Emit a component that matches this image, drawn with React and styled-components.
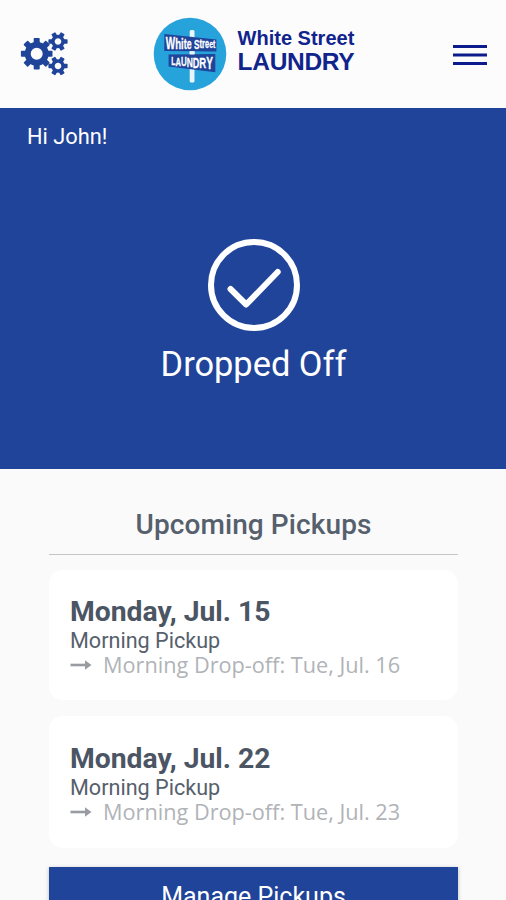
import React from 'react';
import styled, { createGlobalStyle } from 'styled-components';

const GlobalStyle = createGlobalStyle`
  * {
    box-sizing: border-box;
  }

  body {
    margin: 0;
    background-color: #fafafb;
    font-family: Roboto, sans-serif;
  }
`;

const Screen = styled.div`
  width: 100%;
  height: 100vh;
  overflow: hidden;
  display: flex;
  flex-direction: column;
`;

const HeaderWrapper = styled.header`
  flex: none;
  height: 108px;
  padding: 0 19px 0 20px;
  display: grid;
  grid-template-columns: 1fr auto 1fr;
  align-items: center;
  background-color: #fcfcfd;
`;

const IconButton = styled.button`
  display: flex;
  justify-self: ${({ side }) => side};
  padding: 0;
  border: none;
  background-color: transparent;
  color: ${({ color }) => color};
  cursor: pointer;
`;

const Brand = styled.div`
  display: flex;
  align-items: center;
  gap: 11px;
`;

const BrandName = styled.div`
  display: flex;
  flex-direction: column;
  padding-bottom: 9px;
  font-family: 'Liberation Sans', Arial, sans-serif;
  font-weight: bold;
  color: #11248c;
  white-space: nowrap;
`;

const BrandTop = styled.span`
  font-size: 20px;
  line-height: 24px;
`;

const BrandBottom = styled.span`
  font-size: 24.5px;
  line-height: 24px;
  letter-spacing: -0.3px;
`;

const Hero = styled.section`
  flex: none;
  height: 361px;
  background-color: #1f4499;
  color: white;
`;

const Greeting = styled.p`
  margin: 0;
  padding: 15px 27px 0;
  font-size: 21.8px;
  line-height: 28px;
`;

const Status = styled.div`
  display: flex;
  flex-direction: column;
  align-items: center;
  padding: 87px 0 0 1px;
`;

const StatusText = styled.h1`
  margin: 10px 0 0;
  font-size: 34.4px;
  font-weight: 400;
  line-height: 44px;
`;

const Content = styled.main`
  display: flex;
  flex-direction: column;
  padding: 0 48px 0 49px;
`;

const SectionTitle = styled.h2`
  margin: 0 0 15px;
  padding: 38px 0 12px;
  border-bottom: 1px solid #c4c6c8;
  color: #56606c;
  font-size: 28px;
  font-weight: 500;
  line-height: 35px;
  letter-spacing: 0.1px;
  text-align: center;
`;

const Card = styled.article`
  height: ${({ height }) => height}px;
  margin-bottom: ${({ gap }) => gap}px;
  padding: ${({ top }) => top}px 21px 0;
  border-radius: 14px;
  background-color: white;
`;

const CardDate = styled.h3`
  margin: 0;
  color: #4b5563;
  font-size: 28.3px;
  font-weight: 700;
  line-height: 34px;
`;

const CardSlot = styled.p`
  margin: 0;
  color: #56606c;
  font-size: 21.6px;
  line-height: 23px;
`;

const CardReturn = styled.p`
  display: flex;
  align-items: center;
  gap: 11px;
  margin: 0;
  color: #b0b3b7;
  font-family: 'Open Sans', sans-serif;
  font-size: 21.7px;
  line-height: 26px;
`;

const ManageButton = styled.button`
  height: 58px;
  flex: none;
  padding: 0;
  border: none;
  background-color: #1f4499;
  box-shadow: 0 1px 4px rgba(0, 0, 0, 0.25);
  color: white;
  font-family: inherit;
  font-size: 25px;
  cursor: pointer;
`;

const pickups = [
  { date: 'Monday, Jul. 15', dropOff: 'Tue, Jul. 16', height: 130, gap: 16, top: 25 },
  { date: 'Monday, Jul. 22', dropOff: 'Tue, Jul. 23', height: 132, gap: 19, top: 26 },
];

// one ring plus evenly spaced teeth
function Gear({ x, y, teeth, inner, outer, hole, tooth }) {
  const ring = (inner + hole) / 2;
  return (
    <g transform={`translate(${x} ${y})`}>
      <circle r={ring} fill="none" stroke="currentColor" strokeWidth={inner - hole} />
      {Array.from({ length: teeth }, (_, i) => (
        <rect
          key={i}
          x={ring}
          y={-tooth / 2}
          width={outer - ring}
          height={tooth}
          rx="0.8"
          fill="currentColor"
          transform={`rotate(${(360 / teeth) * i})`}
        />
      ))}
    </g>
  );
}

function GearsIcon() {
  return (
    <svg width="50" height="46" viewBox="0 0 50 46">
      <Gear x={16.7} y={22.7} teeth={8} inner={12} outer={15.8} hole={6} tooth={6} />
      <Gear x={38} y={10.5} teeth={6} inner={6.8} outer={9.6} hole={3.3} tooth={4.6} />
      <Gear x={38} y={35} teeth={6} inner={6.8} outer={9.6} hole={3.3} tooth={4.6} />
    </svg>
  );
}

// letters grow or shrink along the line, as on a sign seen at an angle
function SignText({ x, y, from, to, drop, scale, children }) {
  const letters = children.split('');
  return (
    <text transform={`translate(${x} ${y}) scale(${scale} 1)`} fill="white" stroke="white" strokeWidth="0.3" xmlSpace="preserve">
      {letters.map((letter, i) => (
        <tspan key={i} dy={i ? drop : 0} fontSize={from + ((to - from) * i) / (letters.length - 1)}>
          {letter}
        </tspan>
      ))}
    </text>
  );
}

function LogoBadge() {
  return (
    <svg width="74" height="74" viewBox="0 0 74 74" fontFamily="'Liberation Sans', sans-serif" fontWeight="bold">
      <circle cx="37" cy="37" r="36.3" fill="#27a3dc" />
      <rect x="36.7" y="13" width="4.8" height="52.5" rx="1.5" fill="#e9f4fb" />
      <path d="M11.3 17 63.4 22.5V34.5L11.3 34Z" fill="#1f4499" />
      <path d="M15.6 37.5 62.3 37V55.3L15.6 49.5Z" fill="#1f4499" />
      <rect x="36.7" y="34.2" width="4.8" height="3.2" fill="#e9f4fb" />
      <SignText x={12.8} y={31.8} from={16} to={11} drop={-0.05} scale={0.62}>White Street</SignText>
      <SignText x={18.3} y={47.8} from={11} to={16} drop={0.7} scale={0.63}>LAUNDRY</SignText>
    </svg>
  );
}

function MenuIcon() {
  return (
    <svg width="34" height="24" viewBox="0 0 34 24" stroke="currentColor" strokeWidth="3">
      <path d="M0 4.5H34M0 13H34M0 21.5H34" />
    </svg>
  );
}

function CheckIcon() {
  return (
    <svg width="94" height="94" viewBox="0 0 94 94" fill="none" stroke="white" strokeWidth="6">
      <circle cx="47" cy="47" r="43" />
      <path d="M23.5 51 39.2 66.5 70.7 34" strokeLinecap="round" strokeLinejoin="round" />
    </svg>
  );
}

function ArrowIcon() {
  return (
    <svg width="22" height="12" viewBox="0 0 22 12">
      <path d="M0.5 6H17" stroke="#989ca1" strokeWidth="2.6" />
      <path d="M15 1.2 21.5 6 15 10.8Z" fill="#989ca1" />
    </svg>
  );
}

function Header() {
  return (
    <HeaderWrapper>
      <IconButton side="start" color="#1f4499" aria-label="Settings">
        <GearsIcon />
      </IconButton>
      <Brand>
        <LogoBadge />
        <BrandName>
          <BrandTop>White Street</BrandTop>
          <BrandBottom>LAUNDRY</BrandBottom>
        </BrandName>
      </Brand>
      <IconButton side="end" color="#0d1c8c" aria-label="Menu">
        <MenuIcon />
      </IconButton>
    </HeaderWrapper>
  );
}

function PickupCard({ date, dropOff, height, gap, top }) {
  return (
    <Card height={height} gap={gap} top={top}>
      <CardDate>{date}</CardDate>
      <CardSlot>Morning Pickup</CardSlot>
      <CardReturn>
        <ArrowIcon />
        <span>Morning Drop-off: {dropOff}</span>
      </CardReturn>
    </Card>
  );
}

function App() {
  return (
    <Screen>
      <GlobalStyle />
      <Header />
      <Hero>
        <Greeting>Hi John!</Greeting>
        <Status>
          <CheckIcon />
          <StatusText>Dropped Off</StatusText>
        </Status>
      </Hero>
      <Content>
        <SectionTitle>Upcoming Pickups</SectionTitle>
        {pickups.map((pickup) => (
          <PickupCard key={pickup.date} {...pickup} />
        ))}
        <ManageButton>Manage Pickups</ManageButton>
      </Content>
    </Screen>
  );
}

export default App;
